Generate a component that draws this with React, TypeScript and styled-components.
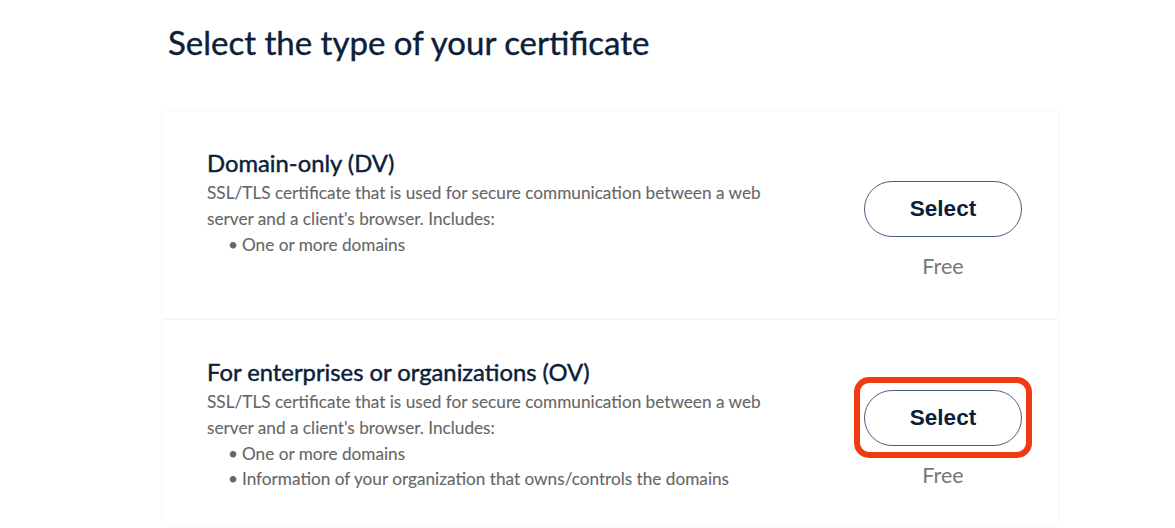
import React from "react";
import styled, { createGlobalStyle } from "styled-components";

const Global = createGlobalStyle`
  html, body { margin: 0; padding: 0; background: #ffffff; }
  body { font-family: Lato, "Open Sans", sans-serif; }
  * { box-sizing: border-box; }
`;

const Page = styled.div`
  width: 1175px;
  height: 528px;
  overflow: hidden;
  padding: 21px 117px 0 163px;
  background: #ffffff;
`;

const Title = styled.h1`
  margin: 0 0 0 5px;
  font-family: Lato, sans-serif;
  font-weight: 400;
  font-size: 33px;
  line-height: 42px;
  color: #0c1e3a;
  -webkit-text-stroke: 0.4px #0c1e3a;
`;

const List = styled.div`
  margin-top: 48px;
  display: flex;
  flex-direction: column;
  gap: 2px;
`;

const Card = styled.section`
  display: flex;
  justify-content: space-between;
  align-items: flex-start;
  background: #ffffff;
  height: 207px;
  padding: 37px 36px 0 44px;
  box-shadow: 0 0 3px rgba(0, 0, 0, 0.07);
`;

const Info = styled.div`
  display: flex;
  flex-direction: column;
`;

const Heading = styled.h2`
  margin: 0 0 2px;
  font-family: Lato, sans-serif;
  font-weight: 400;
  font-size: 23.8px;
  line-height: 30px;
  color: #0c1e3a;
  -webkit-text-stroke: 0.45px #0c1e3a;
`;

const Desc = styled.p`
  margin: 0;
  width: 580px;
  font-family: Lato, sans-serif;
  font-size: 17.2px;
  line-height: 25.8px;
  color: #666666;
  -webkit-text-stroke: 0.1px #666666;
`;

const Bullets = styled.ul`
  margin: 0;
  padding: 0 0 0 21px;
  list-style: none;
`;

const Bullet = styled.li`
  font-family: Lato, sans-serif;
  font-size: 17.2px;
  line-height: 25.8px;
  color: #666666;
  -webkit-text-stroke: 0.1px #666666;
  &::before {
    content: "•";
    margin-right: 4px;
  }
`;

const Side = styled.div`
  width: 158px;
  margin-top: 33px;
  display: flex;
  flex-direction: column;
  align-items: center;
  gap: 16px;
`;

const ButtonWrap = styled.div<{ $highlight?: boolean }>`
  position: relative;
  &::after {
    content: "";
    display: ${(p) => (p.$highlight ? "block" : "none")};
    position: absolute;
    left: -10px;
    right: -10px;
    top: -13px;
    bottom: -12px;
    border: 6px solid #ef3a12;
    border-radius: 15px;
    pointer-events: none;
  }
`;

const SelectButton = styled.button`
  width: 158px;
  height: 56px;
  border: 1px solid #4b5d78;
  border-radius: 28px;
  background: #ffffff;
  font-family: "Liberation Sans", Arial, sans-serif;
  font-weight: 700;
  font-size: 22.5px;
  color: #0c1e3a;
  cursor: pointer;
`;

const Price = styled.div`
  font-family: Lato, sans-serif;
  font-size: 21.5px;
  line-height: 27px;
  color: #777777;
`;

type Cert = {
  title: string;
  items: string[];
  highlight?: boolean;
};

const certs: Cert[] = [
  { title: "Domain-only (DV)", items: ["One or more domains"] },
  {
    title: "For enterprises or organizations (OV)",
    items: [
      "One or more domains",
      "Information of your organization that owns/controls the domains",
    ],
    highlight: true,
  },
];

export default function App() {
  return (
    <>
      <Global />
      <Page>
        <Title>Select the type of your certificate</Title>
        <List>
          {certs.map((c) => (
            <Card key={c.title}>
              <Info>
                <Heading>{c.title}</Heading>
                <Desc>
                  SSL/TLS certificate that is used for secure communication between a web
                  server and a client's browser. Includes:
                </Desc>
                <Bullets>
                  {c.items.map((i) => (
                    <Bullet key={i}>{i}</Bullet>
                  ))}
                </Bullets>
              </Info>
              <Side>
                <ButtonWrap $highlight={c.highlight}>
                  <SelectButton>Select</SelectButton>
                </ButtonWrap>
                <Price>Free</Price>
              </Side>
            </Card>
          ))}
        </List>
      </Page>
    </>
  );
}
